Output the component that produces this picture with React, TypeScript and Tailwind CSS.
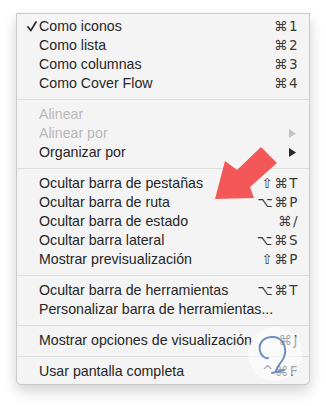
import React from "react";

type Item = { label: string; sc?: string; check?: boolean; disabled?: boolean; sub?: boolean };

const groups: Item[][] = [
  [
    { label: "Como iconos", sc: "⌘1", check: true },
    { label: "Como lista", sc: "⌘2" },
    { label: "Como columnas", sc: "⌘3" },
    { label: "Como Cover Flow", sc: "⌘4" },
  ],
  [
    { label: "Alinear", disabled: true },
    { label: "Alinear por", disabled: true, sub: true },
    { label: "Organizar por", sub: true },
  ],
  [
    { label: "Ocultar barra de pestañas", sc: "⇧⌘T" },
    { label: "Ocultar barra de ruta", sc: "⌥⌘P" },
    { label: "Ocultar barra de estado", sc: "⌘/" },
    { label: "Ocultar barra lateral", sc: "⌥⌘S" },
    { label: "Mostrar previsualización", sc: "⇧⌘P" },
  ],
  [
    { label: "Ocultar barra de herramientas", sc: "⌥⌘T" },
    { label: "Personalizar barra de herramientas..." },
  ],
  [{ label: "Mostrar opciones de visualización", sc: "⌘J" }],
  [{ label: "Usar pantalla completa", sc: "^⌘F" }],
];

function Row({ it }: { it: Item }) {
  const color = it.disabled ? "text-[#b9b9b9]" : "text-[#262626]";
  return (
    <div className={`flex h-[19px] items-center pl-[10px] pr-[10px] ${color}`}>
      <span className="flex w-[12px] items-center">
        {it.check && (
          <svg width="10" height="11" viewBox="0 0 10 11">
            <path d="M1 6 L3.8 9.6 L9 1" fill="none" stroke="#262626" strokeWidth="1.7" strokeLinecap="round" strokeLinejoin="round" />
          </svg>
        )}
      </span>
      <span className="flex-1 whitespace-nowrap text-[14.2px]">{it.label}</span>
      {it.sc && (
        <span className="whitespace-nowrap text-[13.5px] tracking-[1.5px] text-[#3a3a3a] font-['DejaVu_Sans',sans-serif]">{it.sc}</span>
      )}
      {it.sub && (
        <svg width="7" height="9" viewBox="0 0 7 9" className="mr-[3px]">
          <path d="M0 0 L7 4.5 L0 9 Z" fill={it.disabled ? "#c4c4c4" : "#2a2a2a"} />
        </svg>
      )}
    </div>
  );
}

export default function App() {
  return (
    <div className="relative w-[326px] h-[406px] bg-white font-['Liberation_Sans',Arial,sans-serif] overflow-hidden">
      <div className="absolute left-0 top-0 pt-[13px] pl-[16px]">
        <div className="w-[294px] rounded-b-[5px] border border-[#c9c9c9] bg-[#f4f4f4] py-[3px] shadow-[0_6px_14px_rgba(0,0,0,0.18)]">
          {groups.map((g, gi) => (
            <div key={gi}>
              {gi > 0 && (
                <div className="flex h-[12px] items-center">
                  <div className="h-px w-full bg-[#dcdcdc]" />
                </div>
              )}
              {g.map((it, i) => (
                <Row key={i} it={it} />
              ))}
            </div>
          ))}
        </div>
      </div>
      {/* red arrow annotation */}
      <svg className="absolute left-0 top-0" width="326" height="406" viewBox="0 0 326 406">
        <path
          d="M215 199 L225 161 L237 170 L261 147 L277 163 L250 187 L254 198 Z"
          fill="#f45757"
        />
      </svg>
      {/* watermark */}
      <svg className="absolute left-[246px] top-[325px]" width="58" height="58" viewBox="0 0 58 58">
        <circle cx="29" cy="29" r="27" fill="rgba(255,255,255,0.55)" />
        <path
          d="M30 46 C31 40 36 38 38 32 C41 24 38 13 28 12 C19 11 12 17 14 26 C15 31 20 34 22 33"
          fill="none"
          stroke="#6f8fc2"
          strokeWidth="2"
          strokeLinecap="round"
        />
        <path d="M26 48 L38 45" stroke="#6f8fc2" strokeWidth="2" strokeLinecap="round" />
      </svg>
    </div>
  );
}
